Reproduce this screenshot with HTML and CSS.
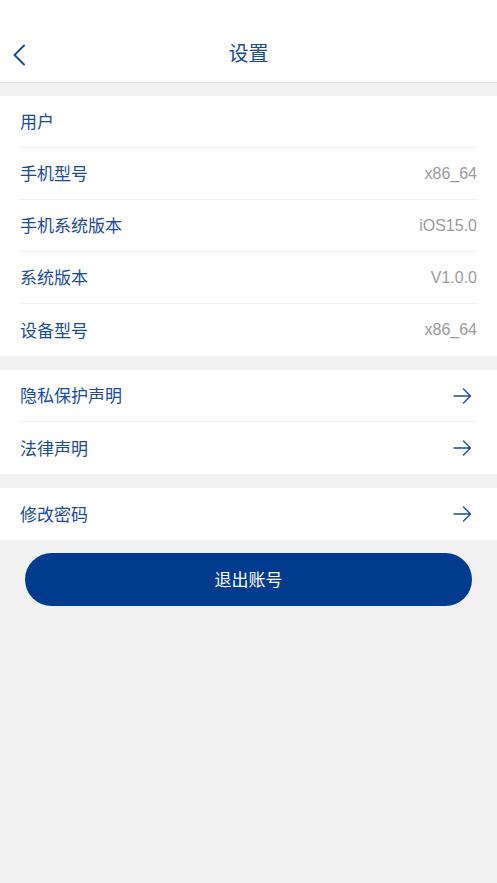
FILE: index.html
```html
<!DOCTYPE html>
<html lang="zh">
<head>
<meta charset="utf-8">
<title>设置</title>
<link rel="stylesheet" href="styles.css">
</head>
<body>
<div class="page">
  <header class="header">
    <div class="nav">
      <span class="back">
        <svg width="14" height="22" viewBox="0 0 14 22"><path d="M12 1.5 L2.5 11 L12 20.5" fill="none" stroke="#1a4a9c" stroke-width="2" stroke-linecap="round" stroke-linejoin="round"/></svg>
      </span>
      <h1 class="title">设置</h1>
    </div>
  </header>

  <section class="group">
    <div class="row"><span class="label">用户</span><span class="value"></span></div>
    <div class="row"><span class="label">手机型号</span><span class="value">x86_64</span></div>
    <div class="row"><span class="label">手机系统版本</span><span class="value">iOS15.0</span></div>
    <div class="row"><span class="label">系统版本</span><span class="value">V1.0.0</span></div>
    <div class="row"><span class="label">设备型号</span><span class="value">x86_64</span></div>
  </section>

  <section class="group">
    <div class="row"><span class="label">隐私保护声明</span><span class="arrow"><svg width="19" height="16" viewBox="0 0 19 16"><path d="M1 8 H17.5 M10.5 1 L17.5 8 L10.5 15" fill="none" stroke="#1a4a9c" stroke-width="1.4" stroke-linecap="round" stroke-linejoin="round"/></svg></span></div>
    <div class="row"><span class="label">法律声明</span><span class="arrow"><svg width="19" height="16" viewBox="0 0 19 16"><path d="M1 8 H17.5 M10.5 1 L17.5 8 L10.5 15" fill="none" stroke="#1a4a9c" stroke-width="1.4" stroke-linecap="round" stroke-linejoin="round"/></svg></span></div>
  </section>

  <section class="group">
    <div class="row"><span class="label">修改密码</span><span class="arrow"><svg width="19" height="16" viewBox="0 0 19 16"><path d="M1 8 H17.5 M10.5 1 L17.5 8 L10.5 15" fill="none" stroke="#1a4a9c" stroke-width="1.4" stroke-linecap="round" stroke-linejoin="round"/></svg></span></div>
  </section>

  <div class="actions">
    <button class="logout">退出账号</button>
  </div>
</div>
</body>
</html>
```

FILE: styles.css
```css
* { box-sizing: border-box; }
html, body { margin: 0; padding: 0; }
body {
  background: #f1f1f1;
  font-family: "Noto Sans CJK SC", "Liberation Sans", sans-serif;
  width: 497px;
  min-height: 883px;
}
.page { display: flex; flex-direction: column; }
.header {
  background: #fff;
  height: 83px;
  padding-top: 31px;
  border-bottom: 1px solid #e4e4e8;
}
.nav {
  position: relative;
  height: 44px;
  display: flex;
  align-items: center;
  justify-content: center;
}
.back {
  position: absolute;
  left: 12px;
  top: 13px;
  display: flex;
}
.title {
  margin: 0;
  font-size: 20px;
  font-weight: 400;
  color: #1a4a9c;
  line-height: 1;
}
.group {
  background: #fff;
  margin-top: 14px;
  padding: 0 20px;
}
.group:first-of-type { margin-top: 13px; }
.row {
  height: 52px;
  display: flex;
  align-items: center;
  justify-content: space-between;
  border-bottom: 1px solid #f1f1f3;
}
.row:last-child { border-bottom: none; }
.label {
  font-size: 17px;
  color: #1a4a9c;
  line-height: 1;
  margin-top: -2px;
}
.value {
  font-family: "Liberation Sans", sans-serif;
  font-size: 16px;
  color: #9b9b9b;
}
.arrow { display: flex; margin-right: 5px; }
.actions {
  padding: 13px 25px 0;
}
.logout {
  display: block;
  width: 100%;
  height: 53px;
  border: none;
  border-radius: 27px;
  background: #013b8e;
  color: #fff;
  font-family: "Noto Sans CJK SC", sans-serif;
  font-size: 17px;
  padding: 0 0 2px;
}
```
